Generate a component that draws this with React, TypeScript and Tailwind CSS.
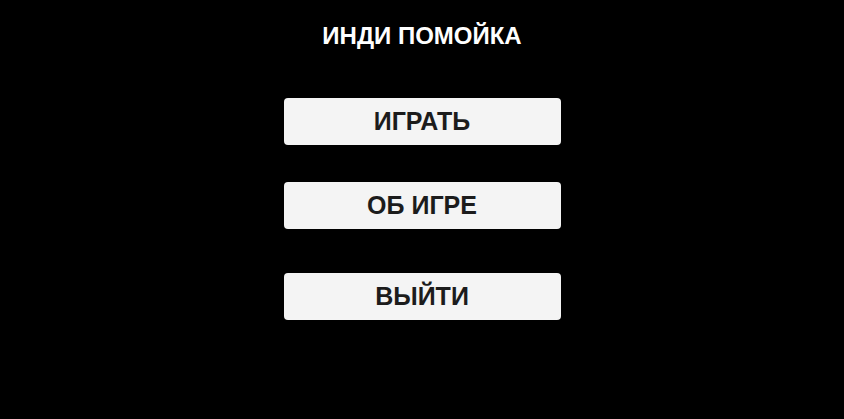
import React from 'react';

const items = [
  { label: 'ИГРАТЬ', mt: 'mt-[50px]' },
  { label: 'ОБ ИГРЕ', mt: 'mt-[37px]' },
  { label: 'ВЫЙТИ', mt: 'mt-[44px]' },
];

export default function App() {
  return (
    <div className="w-[844px] h-[419px] bg-black flex flex-col items-center font-['Liberation_Sans',Arial,sans-serif]">
      {/* заголовок */}
      <h1 className="mt-[24px] h-[24px] leading-[24px] text-[24px] font-bold text-white">ИНДИ ПОМОЙКА</h1>

      {items.map((item) => (
        <button
          key={item.label}
          className={`${item.mt} w-[277px] h-[47px] rounded-[4px] bg-[#f4f4f4] text-[25px] font-bold text-[#1c1c1c] flex items-center justify-center`}
        >
          {item.label}
        </button>
      ))}
    </div>
  );
}
